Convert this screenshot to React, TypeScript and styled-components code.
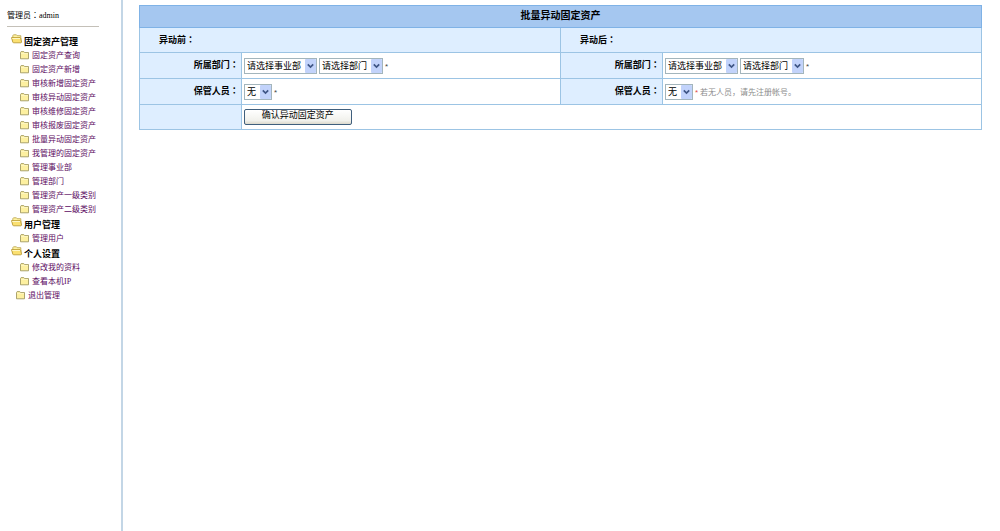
import React from "react";
import styled, { createGlobalStyle } from "styled-components";

const Global = createGlobalStyle`
  * { box-sizing: border-box; }
  body {
    margin: 0;
    background: #fff;
    color: #000;
    font-family: "Liberation Sans", "Noto Sans CJK SC", sans-serif;
    font-size: 9px;
  }
`;

const Page = styled.div`
  display: flex;
  min-height: 100vh;
  position: relative;
  overflow: hidden;
`;

const Watermark = styled.div`
  position: absolute;
  left: 60px;
  top: 280px;
  transform: rotate(-14deg);
  transform-origin: left center;
  color: rgba(0, 0, 0, 0.012);
  font-family: "Liberation Mono", "Noto Sans CJK SC", monospace;
  font-size: 40px;
  font-weight: bold;
  line-height: 48px;
  white-space: nowrap;
  pointer-events: none;
  user-select: none;
`;

const Sidebar = styled.aside`
  flex: 0 0 123px;
  border-right: 2px solid #c3d6e6;
  padding: 9px 0 0 7px;
`;

const UserLine = styled.p`
  margin: 0;
  height: 18px;
  width: 92px;
  line-height: 14px;
  font-family: "Liberation Serif", "Noto Sans CJK TC", serif;
  font-size: 8px;
  border-bottom: 1px solid #c4c0b8;
  white-space: nowrap;
`;

const Menu = styled.nav`
  margin-top: 7px;
  padding-left: 4px;
`;

const GroupTitle = styled.h2`
  margin: 0;
  display: flex;
  align-items: center;
  gap: 1px;
  height: 15px;
  font-size: 9px;
  font-weight: bold;
  white-space: nowrap;
  svg { align-self: flex-start; }
`;

const List = styled.ul`
  list-style: none;
  margin: 0;
  padding: 0;
`;

const Entry = styled.li<{ $indent: number }>`
  display: flex;
  height: 14px;
  padding-left: ${(p) => p.$indent}px;
`;

const MenuLink = styled.a`
  display: flex;
  align-items: center;
  gap: 3px;
  color: #5c0a62;
  font-family: "Liberation Serif", "Noto Sans CJK SC", serif;
  font-size: 8px;
  line-height: 14px;
  text-decoration: none;
  white-space: nowrap;
`;

const Main = styled.main`
  flex: 1;
  padding: 5px 18px 0 16px;
`;

const Sheet = styled.table`
  width: 100%;
  table-layout: fixed;
  border-collapse: collapse;
`;

const LabelCol = styled.col`
  width: 12.1%;
`;

const Title = styled.th`
  height: 22px;
  padding: 0 0 2px;
  border: 1px solid #7fb2e6;
  background: #a5c7f0;
  font-size: 10px;
  line-height: 14px;
`;

const SectionHead = styled.th`
  height: 25px;
  padding: 0 0 2px 19px;
  border: 1px solid #9cc4e4;
  background: #deeeff;
  font-family: "Liberation Sans", "Noto Sans CJK TC", sans-serif;
  text-align: left;
`;

const Label = styled.th<{ $last?: boolean }>`
  height: ${(p) => (p.$last ? 25 : 26)}px;
  padding: 0 2px 2px 0;
  border: 1px solid #9cc4e4;
  background: #deeeff;
  font-family: "Liberation Sans", "Noto Sans CJK TC", sans-serif;
  text-align: right;
`;

const Cell = styled.td`
  padding: 0 2px;
  border: 1px solid #9cc4e4;
`;

const Fields = styled.div`
  display: flex;
  align-items: center;
  gap: 2px;
`;

const Picker = styled.span<{ $width: number }>`
  position: relative;
  width: ${(p) => p.$width}px;
  height: 16px;
  select {
    appearance: none;
    display: block;
    width: 100%;
    height: 16px;
    margin: 0;
    padding: 0 0 0 2px;
    border: 1px solid #a3b5bc;
    border-radius: 0;
    background: #fff;
    color: #000;
    font: inherit;
  }
  svg {
    position: absolute;
    top: 1px;
    right: 1px;
    pointer-events: none;
  }
`;

const Star = styled.span<{ $red?: boolean }>`
  color: ${(p) => (p.$red ? "#e04a4a" : "#444")};
  font-size: 8px;
  line-height: 8px;
  padding-top: 2px;
`;

const Hint = styled.span`
  color: #8c8c8c;
  font-size: 8px;
`;

const Submit = styled.button`
  display: block;
  width: 108px;
  height: 16px;
  padding: 0 0 4px;
  border: 1px solid #3f5f7d;
  border-radius: 2px;
  background: linear-gradient(#fff, #f1f1ec 75%, #dcd9cc);
  color: #000;
  font: inherit;
  line-height: 10px;
`;

const ClosedFolder = () => (
  <svg width="9" height="10" viewBox="0 0 9 10" aria-hidden="true">
    <path d="M.5 7.8V1.4L1.1.6h2.7l.7.9h4v6.3z" fill="#fdf0a0" stroke="#a39a62" strokeWidth=".9" />
    <path d="M1 2.4h7" stroke="#fffbd0" strokeWidth=".7" />
  </svg>
);

const OpenFolder = () => (
  <svg width="12" height="10" viewBox="0 0 12 10" aria-hidden="true">
    <path d="M1.8 7V1.7L2.5.8h2.9l.8.9h3.6v5.5z" fill="#fff3a0" stroke="#b8a04a" strokeWidth=".8" />
    <path d="M.5 3.6h8.6l.6.6.9 4.1-.6.5H2.4l-.6-.6z" fill="#fbe071" stroke="#b3932c" strokeWidth=".8" />
    <path d="M1.2 4.5h7.8" stroke="#fffbd0" strokeWidth=".9" />
  </svg>
);

const Arrow = () => (
  <svg width="11" height="14" viewBox="0 0 11 14" aria-hidden="true">
    <rect width="11" height="14" rx="1" fill="#c2d3fb" />
    <path d="M2.8 5.4l2.7 2.7 2.7-2.7" fill="none" stroke="#3f5686" strokeWidth="1.7" />
  </svg>
);

const Select = ({ label, text, width }: { label: string; text: string; width: number }) => (
  <Picker $width={width}>
    <select aria-label={label}>
      <option>{text}</option>
    </select>
    <Arrow />
  </Picker>
);

const Departments = ({ side }: { side: string }) => (
  <Fields>
    <Select label={`${side}事业部`} text="请选择事业部" width={73} />
    <Select label={`${side}部门`} text="请选择部门" width={64} />
    <Star>*</Star>
  </Fields>
);

const groups = [
  {
    title: "固定资产管理",
    items: [
      "固定资产查询", "固定资产新增", "审核新增固定资产", "审核异动固定资产",
      "审核维修固定资产", "审核报废固定资产", "批量异动固定资产", "我管理的固定资产",
      "管理事业部", "管理部门", "管理资产一级类别", "管理资产二级类别",
    ],
  },
  { title: "用户管理", items: ["管理用户"] },
  { title: "个人设置", items: ["修改我的资料", "查看本机IP"] },
];

const MenuEntry = ({ text, indent }: { text: string; indent: number }) => (
  <Entry $indent={indent}>
    <MenuLink href="#">
      <ClosedFolder />
      {text}
    </MenuLink>
  </Entry>
);

export default function App() {
  return (
    <>
      <Global />
      <Page>
        <Sidebar>
          <UserLine>管理员：admin</UserLine>
          <Menu>
            {groups.map((g) => (
              <section key={g.title}>
                <GroupTitle>
                  <OpenFolder />
                  {g.title}
                </GroupTitle>
                <List>
                  {g.items.map((t) => (
                    <MenuEntry key={t} text={t} indent={9} />
                  ))}
                </List>
              </section>
            ))}
            <List>
              <MenuEntry text="退出管理" indent={5} />
            </List>
          </Menu>
        </Sidebar>
        <Main>
          <Sheet>
            <colgroup>
              <LabelCol />
              <col />
              <LabelCol />
              <col />
            </colgroup>
            <thead>
              <tr>
                <Title colSpan={4}>批量异动固定资产</Title>
              </tr>
            </thead>
            <tbody>
              <tr>
                <SectionHead colSpan={2}>异动前：</SectionHead>
                <SectionHead colSpan={2}>异动后：</SectionHead>
              </tr>
              <tr>
                <Label>所属部门：</Label>
                <Cell><Departments side="异动前" /></Cell>
                <Label>所属部门：</Label>
                <Cell><Departments side="异动后" /></Cell>
              </tr>
              <tr>
                <Label>保管人员：</Label>
                <Cell>
                  <Fields>
                    <Select label="异动前保管人员" text="无" width={28} />
                    <Star>*</Star>
                  </Fields>
                </Cell>
                <Label>保管人员：</Label>
                <Cell>
                  <Fields>
                    <Select label="异动后保管人员" text="无" width={28} />
                    <Star $red>*</Star>
                    <Hint>若无人员，请先注册帐号。</Hint>
                  </Fields>
                </Cell>
              </tr>
              <tr>
                <Label $last />
                <Cell colSpan={3}>
                  <Submit type="button">确认异动固定资产</Submit>
                </Cell>
              </tr>
            </tbody>
          </Sheet>
        </Main>
        <Watermark aria-hidden="true">小店-http://1982992008.paipai.com</Watermark>
      </Page>
    </>
  );
}
